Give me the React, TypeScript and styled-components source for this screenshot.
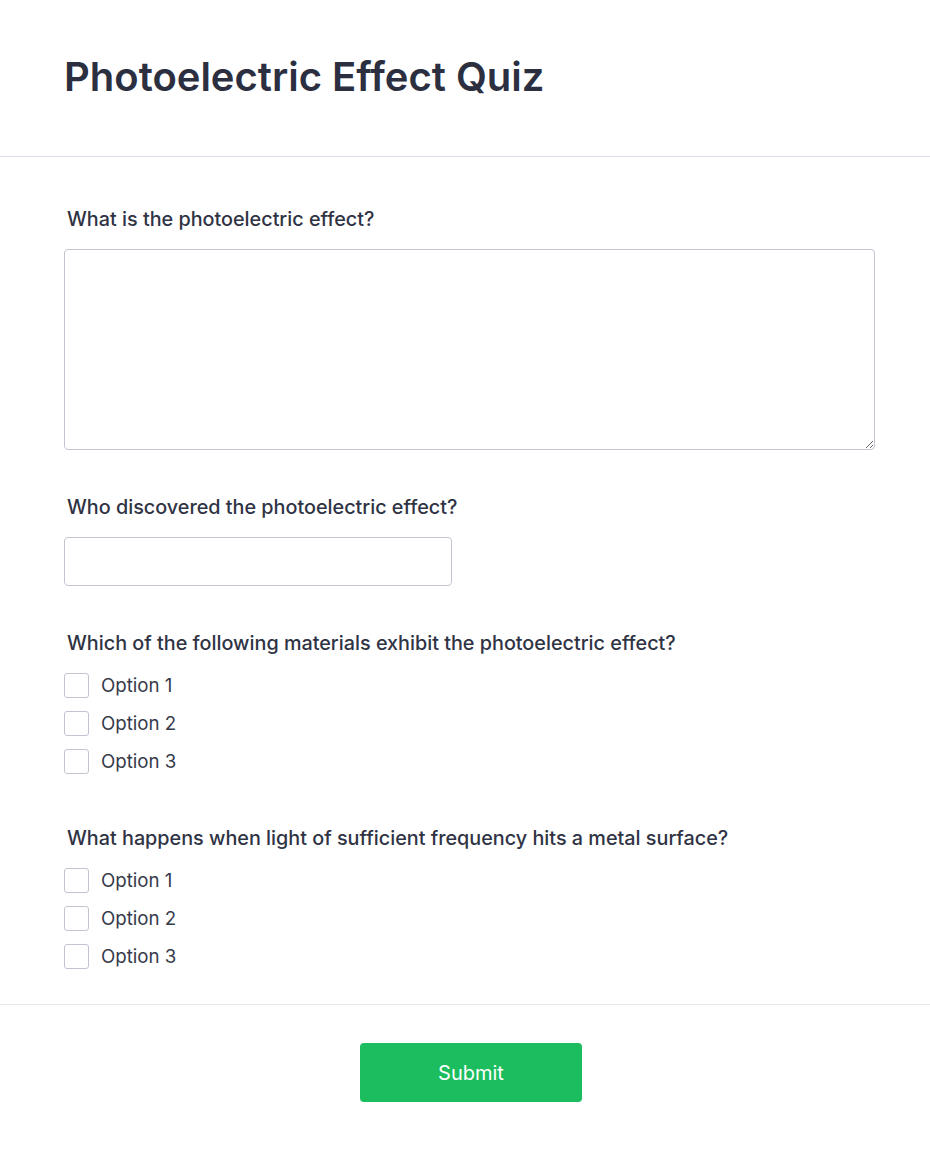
import React from "react";
import styled, { createGlobalStyle } from "styled-components";

const Global = createGlobalStyle`
  html, body { margin: 0; padding: 0; background: #ffffff; }
  body { font-family: Inter, "Noto Sans", sans-serif; color: #2d3142; }
  * { box-sizing: border-box; }
`;

const Page = styled.div`
  width: 930px;
  min-height: 1151px;
  background: #ffffff;
  display: flex;
  flex-direction: column;
`;

const Header = styled.header`
  height: 157px;
  border-bottom: 1px solid #dcdce6;
  padding: 53px 64px 0;
`;

const Title = styled.h1`
  margin: 0;
  font-size: 40px;
  line-height: 48px;
  font-weight: 600;
  color: #2b2f3f;
`;

const Body = styled.main`
  padding: 48px 64px 28px;
  display: flex;
  flex-direction: column;
  gap: 43px;
  border-bottom: 1px solid #e6e6ee;
`;

const Section = styled.section`
  display: flex;
  flex-direction: column;
  gap: 16px;
`;

const Label = styled.label`
  display: block;
  padding-left: 3px;
  font-size: 19.8px;
  line-height: 28px;
  font-weight: 500;
  color: #2f3344;
`;

const TextArea = styled.textarea`
  display: block;
  width: 811px;
  height: 201px;
  border: 1px solid #c4c4d0;
  border-radius: 4px;
  resize: vertical;
  font: inherit;
`;

const TextInput = styled.input`
  display: block;
  width: 388px;
  height: 49px;
  border: 1px solid #c4c4d0;
  border-radius: 4px;
  font: inherit;
`;

const Options = styled.div`
  display: flex;
  flex-direction: column;
  gap: 13px;
  padding-bottom: 7px;
`;

const OptionRow = styled.label`
  display: flex;
  align-items: center;
  gap: 12px;
  height: 25px;
  font-size: 18.7px;
  color: #363a4a;
`;

const Box = styled.input.attrs({ type: "checkbox" })`
  appearance: none;
  margin: 0;
  width: 25px;
  height: 25px;
  border: 1px solid #c4c4d0;
  border-radius: 3px;
  background: #fff;
`;

const Footer = styled.footer`
  flex: 1;
  display: flex;
  justify-content: center;
  padding: 38px 0 0 12px;
`;

const SubmitButton = styled.button`
  width: 222px;
  height: 59px;
  border: none;
  border-radius: 4px;
  background: #1bbd5e;
  color: #ffffff;
  font-family: Inter, "Noto Sans", sans-serif;
  font-size: 20px;
  font-weight: 400;
`;

const Checks: React.FC<{ name: string }> = ({ name }) => (
  <Options>
    {["Option 1", "Option 2", "Option 3"].map((o) => (
      <OptionRow key={o}>
        <Box name={name} />
        {o}
      </OptionRow>
    ))}
  </Options>
);

export default function App() {
  return (
    <Page>
      <Global />
      <Header>
        <Title>Photoelectric Effect Quiz</Title>
      </Header>
      <Body>
        <Section>
          <Label>What is the photoelectric effect?</Label>
          <TextArea />
        </Section>
        <Section>
          <Label>Who discovered the photoelectric effect?</Label>
          <TextInput type="text" />
        </Section>
        <Section>
          <Label>Which of the following materials exhibit the photoelectric effect?</Label>
          <Checks name="q3" />
        </Section>
        <Section>
          <Label>What happens when light of sufficient frequency hits a metal surface?</Label>
          <Checks name="q4" />
        </Section>
      </Body>
      <Footer>
        <SubmitButton>Submit</SubmitButton>
      </Footer>
    </Page>
  );
}
